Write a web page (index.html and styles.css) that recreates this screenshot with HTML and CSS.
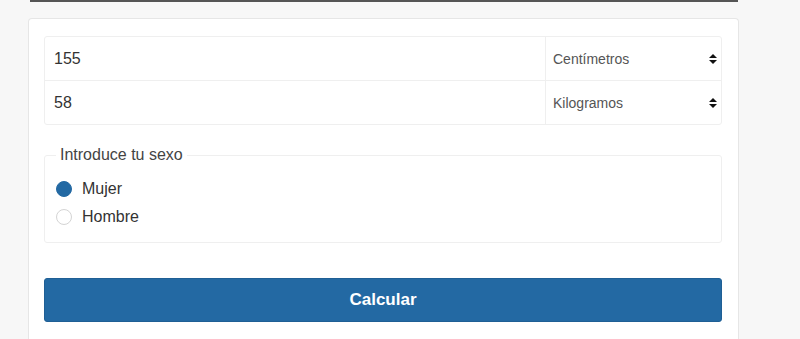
FILE: index.html
```html
<!DOCTYPE html>
<html lang="es">
<head>
<meta charset="utf-8">
<title>Calculadora</title>
<link rel="stylesheet" href="styles.css">
</head>
<body>
<div class="topline"></div>
<main class="card">
  <div class="group">
    <div class="row">
      <div class="field">155</div>
      <div class="unit"><span>Centímetros</span>
        <svg class="arrows" width="8" height="10" viewBox="0 0 8 10"><polygon points="0,4 4,0 8,4"/><polygon points="0,6 8,6 4,10"/></svg>
      </div>
    </div>
    <div class="row">
      <div class="field">58</div>
      <div class="unit"><span>Kilogramos</span>
        <svg class="arrows" width="8" height="10" viewBox="0 0 8 10"><polygon points="0,4 4,0 8,4"/><polygon points="0,6 8,6 4,10"/></svg>
      </div>
    </div>
  </div>
  <fieldset class="sex">
    <legend>Introduce tu sexo</legend>
    <div class="option"><span class="radio checked"></span>Mujer</div>
    <div class="option"><span class="radio"></span>Hombre</div>
  </fieldset>
  <button class="btn">Calcular</button>
</main>
</body>
</html>
```
FILE: styles.css
```css
html, body {
  margin: 0;
  padding: 0;
}
body {
  background: #f7f7f7;
  font-family: "Liberation Sans", Arial, sans-serif;
  color: #333;
  height: 339px;
  overflow: hidden;
}
.topline {
  margin: 0 62px 0 30px;
  height: 2px;
  background: #555;
}
.card {
  display: block;
  margin: 16px 0 0 28px;
  width: 678px;
  background: #fff;
  border: 1px solid #e6e6e6;
  border-bottom: 0;
  border-radius: 4px 4px 0 0;
  padding: 17px 16px 17px 15px;
}
.group {
  border: 1px solid #efefef;
  border-radius: 3px;
}
.row {
  display: flex;
  height: 43px;
}
.row + .row {
  border-top: 1px solid #efefef;
}
.field {
  flex: 1;
  display: flex;
  align-items: center;
  padding-left: 9px;
  font-size: 16px;
  color: #333;
  border-right: 1px solid #efefef;
}
.unit {
  width: 164px;
  display: flex;
  align-items: center;
  justify-content: space-between;
  padding: 0 4px 0 7px;
  font-size: 14px;
  color: #555;
}
.arrows {
  fill: #111;
  display: block;
}
.sex {
  margin: 21px 0 0;
  border: 1px solid #efefef;
  border-radius: 3px;
  padding: 11px 11px 11px;
  min-width: 0;
}
.sex legend {
  padding: 0 4px;
  font-size: 16px;
  line-height: 18px;
  color: #444;
}
.option {
  display: flex;
  align-items: center;
  height: 28px;
  font-size: 16px;
  color: #333;
}
.radio {
  width: 16px;
  height: 16px;
  box-sizing: border-box;
  border-radius: 50%;
  border: 1px solid #d4d4d4;
  background: #fff;
  margin-right: 10px;
}
.radio.checked {
  background: #2369a3;
  border-color: #2369a3;
}
.btn {
  display: block;
  width: 100%;
  margin-top: 35px;
  height: 44px;
  border: 1px solid #1f5f95;
  border-radius: 3px;
  background: #2369a3;
  color: #fff;
  font-family: "Liberation Sans", Arial, sans-serif;
  font-weight: bold;
  font-size: 17px;
}
```
